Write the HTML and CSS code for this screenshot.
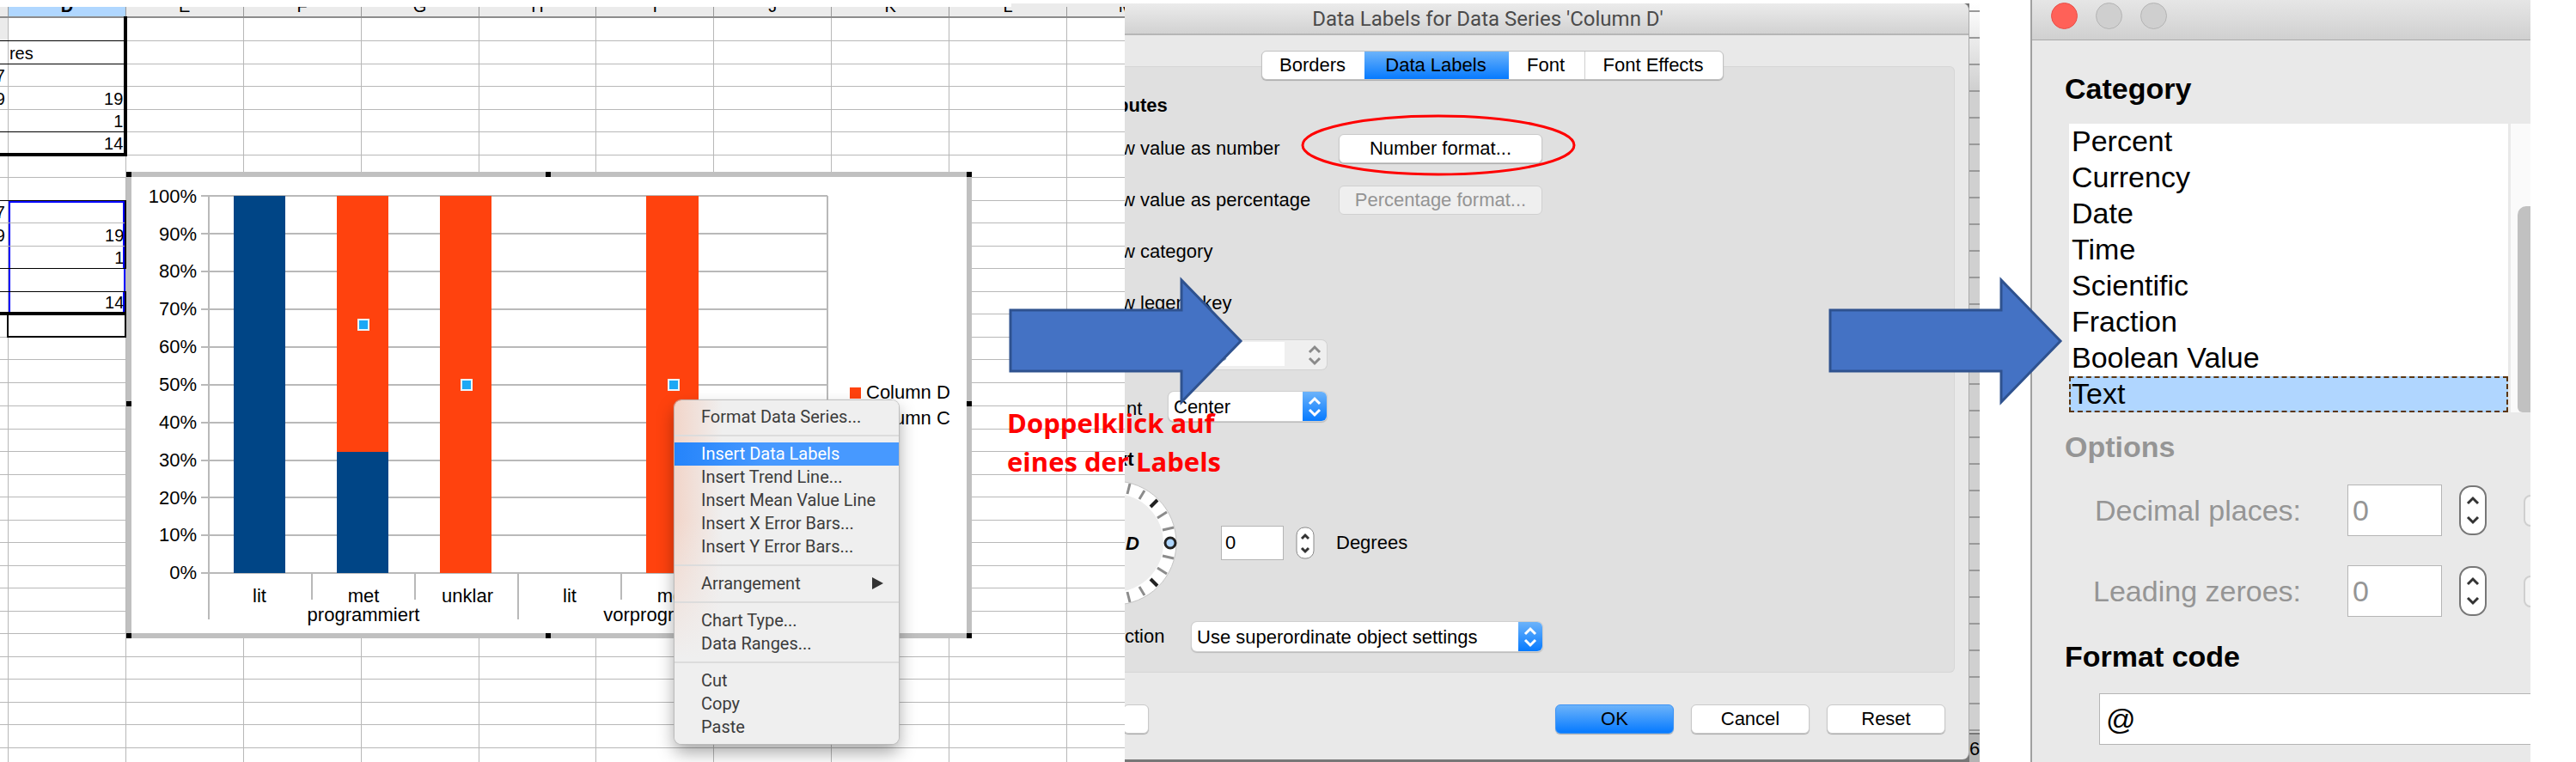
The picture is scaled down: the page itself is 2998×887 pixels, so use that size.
FILE: index.html
```html
<!DOCTYPE html>
<html lang="en">
<head>
<meta charset="utf-8">
<title>Data Labels for Data Series</title>
<link rel="stylesheet" href="styles.css">
</head>
<body>
<main class="stage">

  <section class="sheet-panel">
    <div class="backdrop-edge"></div>
    <div class="sheet">
      <table class="cells">
        <thead><tr id="head"></tr></thead>
        <tbody id="rows"></tbody>
      </table>

      <figure class="chart">
        <svg class="chart-svg" viewBox="147 200 984 543" width="984" height="543" role="img" aria-label="Stacked percent column chart">
          <rect x="150" y="203" width="978" height="537" fill="#fff" stroke="#c0c0c0" stroke-width="6"/>
          <g stroke="#b9b9b9" stroke-width="2" fill="none" shape-rendering="crispEdges">
            <path d="M234 228H963M234 272H963M234 316H963M234 360H963M234 404H963M234 448H963M234 492H963M234 536H963M234 579H963M234 623H963M234 667H963"/>
            <path d="M243 228V721M603 667V721M363 667V698M483 667V698M723 667V698M843 667V698M963 228V667"/>
          </g>
          <g fill="#004586">
            <rect x="272" y="228" width="60" height="439"/>
            <rect x="392" y="526" width="60" height="141"/>
          </g>
          <g fill="#ff420e">
            <rect x="392" y="228" width="60" height="298"/>
            <rect x="512" y="228" width="60" height="439"/>
            <rect x="752" y="228" width="61" height="439"/>
            <rect x="989" y="451" width="13" height="13"/>
          </g>
          <g fill="#1ba8f5" stroke="#e8f4fd" stroke-width="2">
            <rect x="417" y="372" width="12" height="12"/>
            <rect x="537" y="442" width="12" height="12"/>
            <rect x="778" y="442" width="12" height="12"/>
          </g>
          <g class="axis-y">
            <text x="229" y="236">100%</text><text x="229" y="280">90%</text><text x="229" y="323">80%</text>
            <text x="229" y="367">70%</text><text x="229" y="411">60%</text><text x="229" y="455">50%</text>
            <text x="229" y="499">40%</text><text x="229" y="543">30%</text><text x="229" y="587">20%</text>
            <text x="229" y="630">10%</text><text x="229" y="674">0%</text>
          </g>
          <g class="axis-x">
            <text x="302" y="701">lit</text><text x="423" y="701">met</text><text x="544" y="701">unklar</text>
            <text x="663" y="701">lit</text><text x="783" y="701">met</text>
            <text x="423" y="723">programmiert</text><text x="783" y="723">vorprogrammiert</text>
          </g>
          <g class="legend"><text x="1008" y="464">Column D</text><text x="1008" y="494">Column C</text></g>
          <g fill="#000">
            <rect x="147" y="200" width="6" height="6"/><rect x="635" y="200" width="6" height="6"/><rect x="1125" y="200" width="6" height="6"/>
            <rect x="147" y="467" width="6" height="6"/><rect x="1125" y="467" width="6" height="6"/>
            <rect x="147" y="737" width="6" height="6"/><rect x="635" y="737" width="6" height="6"/><rect x="1125" y="737" width="6" height="6"/>
          </g>
        </svg>
      </figure>

      <div class="menu" role="menu">
        <button class="menu-item" role="menuitem">Format Data Series...</button>
        <hr class="menu-line">
        <button class="menu-item is-active" role="menuitem">Insert Data Labels</button>
        <button class="menu-item" role="menuitem">Insert Trend Line...</button>
        <button class="menu-item" role="menuitem">Insert Mean Value Line</button>
        <button class="menu-item" role="menuitem">Insert X Error Bars...</button>
        <button class="menu-item" role="menuitem">Insert Y Error Bars...</button>
        <hr class="menu-line">
        <button class="menu-item" role="menuitem">Arrangement
          <svg width="13" height="14" viewBox="0 0 13 14"><path d="M0 0L13 7L0 14Z" fill="#333"/></svg>
        </button>
        <hr class="menu-line">
        <button class="menu-item" role="menuitem">Chart Type...</button>
        <button class="menu-item" role="menuitem">Data Ranges...</button>
        <hr class="menu-line">
        <button class="menu-item" role="menuitem">Cut</button>
        <button class="menu-item" role="menuitem">Copy</button>
        <button class="menu-item" role="menuitem">Paste</button>
      </div>
    </div>
  </section>

  <section class="dialog-panel">
    <div class="dialog-clip">
      <div class="dialog">
        <header class="dialog-title">Data Labels for Data Series 'Column D'</header>
        <div class="dialog-body">
          <nav class="tabs" role="tablist">
            <button class="tab tab-borders" role="tab">Borders</button>
            <button class="tab tab-labels is-active" role="tab" aria-selected="true">Data Labels</button>
            <button class="tab tab-font" role="tab">Font</button>
            <button class="tab tab-effects" role="tab">Font Effects</button>
          </nav>
          <div class="pane">
            <h2 class="pane-heading">butes</h2>
            <div class="field">
              <span class="field-label">w value as number</span>
              <span class="ringed">
                <button class="btn btn-wide">Number format...</button>
                <svg class="ring" width="320" height="72" viewBox="0 0 320 72"><ellipse cx="160" cy="36" rx="158" ry="34" fill="none" stroke="#f00" stroke-width="3"/></svg>
              </span>
            </div>
            <div class="field">
              <span class="field-label">w value as percentage</span>
              <button class="btn btn-wide" disabled>Percentage format...</button>
            </div>
            <div class="field"><span class="field-label">w category</span></div>
            <div class="field"><span class="field-label">w legend key</span></div>
            <div class="field field-combo">
              <span class="combo combo-off">
                <select aria-label="Separator" disabled><option>Space</option></select>
                <svg width="28" height="34" viewBox="0 0 28 34"><path d="M8 14L14 8L20 14M8 21L14 27L20 21" fill="none" stroke="#8a8a8a" stroke-width="3"/></svg>
              </span>
            </div>
            <div class="field field-combo">
              <label class="combo-label" for="placement">nt</label>
              <span class="combo">
                <select id="placement"><option>Center</option></select>
                <svg width="28" height="34" viewBox="0 0 28 34"><path d="M8 14L14 8L20 14M8 21L14 27L20 21" fill="none" stroke="#fff" stroke-width="3"/></svg>
              </span>
            </div>
            <h2 class="pane-heading heading-rotate">xt</h2>
            <div class="rotate">
              <svg class="dial" width="62" height="146" viewBox="0 -73 62 146">
                <circle cx="-12" cy="0" r="72" fill="#fff" stroke="#c4c4c4"/>
                <circle cx="-12" cy="0" r="57" fill="#ececec"/>
                <g stroke="#8c8c8c" stroke-width="3">
                  <path d="M3 -57L6 -69M17 -51L23 -61M38 -29L49 -36M44 -15L57 -18M44 15L57 18M38 29L49 36M17 51L23 61M3 57L6 69"/>
                  <path d="M30 -42L38 -50M30 42L38 50" stroke="#222" stroke-width="4"/>
                </g>
                <circle cx="53" cy="0" r="6" fill="#aed6ff" stroke="#222" stroke-width="3"/>
                <text class="dial-text" x="1" y="8">D</text>
              </svg>
              <input class="num" id="degrees" type="text" value="0">
              <svg class="spin" width="22" height="38" viewBox="0 0 22 38"><rect x="1" y="1" width="20" height="36" rx="9" fill="#fff" stroke="#8a8a8a"/><path d="M7 14L11 10L15 14M7 25L11 29L15 25" fill="none" stroke="#333" stroke-width="3"/></svg>
              <label for="degrees">Degrees</label>
            </div>
            <div class="field field-direction">
              <label class="direction-label" for="direction">ction</label>
              <span class="combo combo-long">
                <select id="direction"><option>Use superordinate object settings</option></select>
                <svg width="28" height="34" viewBox="0 0 28 34"><path d="M8 14L14 8L20 14M8 21L14 27L20 21" fill="none" stroke="#fff" stroke-width="3"/></svg>
              </span>
            </div>
          </div>
          <footer class="dialog-footer">
            <button class="btn btn-help" aria-label="Help"></button>
            <button class="btn btn-primary">OK</button>
            <button class="btn">Cancel</button>
            <button class="btn">Reset</button>
          </footer>
        </div>
      </div>
      <div class="shade"><div class="shade-rows"></div><div class="shade-status">6</div></div>
    </div>
    <svg class="arrow arrow-first" width="274" height="150" viewBox="0 0 274 150"><path d="M2 39H201V4L270 75L201 146V110H2Z" fill="#4472c4" stroke="#2f528f" stroke-width="3"/></svg>
    <p class="note">Doppelklick auf<br>eines der Labels</p>
  </section>

  <section class="format-panel">
    <div class="format">
      <header class="format-title"><i class="dot dot-close"></i><i class="dot"></i><i class="dot"></i></header>
      <h2 class="format-heading heading-category">Category</h2>
      <div class="list-area">
        <ul class="list" role="listbox" aria-label="Category">
          <li role="option">Percent</li>
          <li role="option">Currency</li>
          <li role="option">Date</li>
          <li role="option">Time</li>
          <li role="option">Scientific</li>
          <li role="option">Fraction</li>
          <li role="option">Boolean Value</li>
          <li role="option" class="is-selected" aria-selected="true">Text</li>
        </ul>
        <div class="track"><div class="thumb"></div></div>
      </div>
      <h2 class="format-heading heading-options">Options</h2>
      <div class="option">
        <label for="decimals">Decimal places:</label>
        <input class="num num-big" id="decimals" type="text" value="0" disabled>
        <svg class="spin-big" width="32" height="58" viewBox="0 0 32 58"><rect x="1" y="1" width="30" height="56" rx="13" fill="#fff" stroke="#777" stroke-width="2"/><path d="M10 21L16 15L22 21M10 37L16 43L22 37" fill="none" stroke="#333" stroke-width="3"/></svg>
        <span class="check-edge"></span>
      </div>
      <div class="option">
        <label for="zeroes">Leading zeroes:</label>
        <input class="num num-big" id="zeroes" type="text" value="0" disabled>
        <svg class="spin-big" width="32" height="58" viewBox="0 0 32 58"><rect x="1" y="1" width="30" height="56" rx="13" fill="#fff" stroke="#777" stroke-width="2"/><path d="M10 21L16 15L22 21M10 37L16 43L22 37" fill="none" stroke="#333" stroke-width="3"/></svg>
        <span class="check-edge"></span>
      </div>
      <h2 class="format-heading heading-code"><label for="code">Format code</label></h2>
      <input class="num code" id="code" type="text" value="@">
    </div>
    <svg class="arrow arrow-second" width="274" height="150" viewBox="0 0 274 150"><path d="M2 39H201V4L270 75L201 146V110H2Z" fill="#4472c4" stroke="#2f528f" stroke-width="3"/></svg>
  </section>

</main>
<script src="sheet.js"></script>
</body>
</html>
```

FILE: styles.css
```css
* { box-sizing: border-box; }

body {
  margin: 0;
  background: #fff;
  color: #000;
  font-family: "Liberation Sans", Arial, sans-serif;
  font-size: 22px;
}

button, input, select { font: inherit; color: inherit; }
h2, p, ul, figure { margin: 0; padding: 0; }
svg { display: block; flex: none; }

.stage {
  display: grid;
  grid-template-columns: minmax(0, 1309fr) minmax(0, 995fr) minmax(0, 641fr);
  min-height: 100vh;
  padding-right: 53px;
  overflow: hidden;
}

/* Spreadsheet */
.sheet-panel {
  display: flex;
  flex-direction: column;
  padding-top: 4px;
  contain: size;
  overflow: hidden;
}
.backdrop-edge { flex: none; width: 132px; height: 4px; margin-left: auto; background: #ebebeb; }
.sheet { position: relative; flex: 1; min-height: 0; overflow: hidden; }

.cells {
  table-layout: fixed;
  width: 1507px;
  margin: -14px 0 0 -128px;
  border-collapse: collapse;
  font-size: 20px;
  line-height: 20px;
}
.cells th {
  height: 26px;
  padding: 0;
  background: #ebebeb;
  border-right: 1px solid #999;
  border-bottom: 2px solid #8c8c8c;
  font-weight: 400;
}
.cells .head-active { background: #b0d7ff; font-weight: 700; }
.cells td {
  height: 26px;
  padding: 2px 1px 0;
  border: 1px solid #b8b8b8;
  text-align: right;
}
.cells tr:nth-child(even) td, .cells tr:nth-child(16n+1) td { height: 27px; }
.cells .c { padding-right: 3px; }
.cells .text { text-align: left; }
.cells .stub { background: #ebebeb; }
.cells .line { border-bottom: 1px solid #000; }
.cells .heavy { border-bottom: 4px solid #000; }
.cells .edge { border-right: 4px solid #000; }
.cells .side { border-right: 2px solid #000; }
.cells .first { border-left: 1px solid #000; border-top: 1px solid #000; }
.cells .cursor { border: 2px solid #000; border-top: 4px solid #000; }
.cells .range { box-shadow: inset 2px 0 #00f, inset -2px 0 #00f; }
.cells .range-top { box-shadow: inset 2px 0 #00f, inset -2px 0 #00f, inset 0 2px #00f; }

.chart { position: absolute; left: 147px; top: 192px; }
.chart text { font-size: 22px; }
.axis-y { text-anchor: end; }
.axis-x { text-anchor: middle; }

.menu {
  position: absolute;
  left: 785px;
  top: 458px;
  width: 261px;
  padding: 6px 0;
  border-radius: 8px;
  background:
    linear-gradient(rgba(239, 239, 239, 0) 35%, #efefef 75%),
    linear-gradient(90deg, #f2d5c9, #efefef 56px);
  box-shadow: 0 0 1px 1px #bbb, 0 10px 20px rgba(0, 0, 0, .35);
  font-family: Roboto, sans-serif;
  font-size: 20px;
  color: #3c3c3c;
}
.menu-item {
  display: flex;
  align-items: center;
  justify-content: space-between;
  width: 100%;
  height: 27px;
  padding: 0 18px 2px 31px;
  border: 0;
  background: none;
  text-align: left;
  line-height: 24px;
}
.menu-item.is-active { background: linear-gradient(90deg, #2584fb, #4799ff 40%); color: #fff; }
.menu-line { height: 2px; margin: 7px 0; border: 0; background: #dcdcdc; }

/* Data labels dialog */
.dialog-panel { position: relative; padding-top: 4px; }
.dialog-clip { display: flex; height: 100%; overflow: hidden; background: #777; }
.dialog {
  display: flex;
  flex-direction: column;
  flex: 1;
  min-width: 0;
  margin-bottom: 3px;
  background: #e9e9e9;
  border-right: 1px solid #aaa;
  border-radius: 0 8px 8px 0;
  overflow: hidden;
}
.dialog-title {
  height: 37px;
  padding-right: 137px;
  border-bottom: 2px solid #b6b6b6;
  background: linear-gradient(#ebebeb, #d2d2d2);
  color: #4b4b4b;
  font-family: Roboto, sans-serif;
  font-size: 24px;
  line-height: 36px;
  text-align: center;
}
.dialog-body { display: flex; flex-direction: column; flex: 1; padding: 18px 16px 0 0; }
.tabs {
  display: flex;
  align-self: flex-start;
  z-index: 1;
  height: 34px;
  margin: 0 0 -16px 159px;
  border: 1px solid #c2c2c2;
  border-radius: 6px;
  background: #fff;
  box-shadow: 0 1px 1px #aaa;
}
.tab { padding: 0 2px 0 0; border: 0; border-right: 1px solid #d0d0d0; background: none; }
.tab-borders { width: 119px; border-right: 0; }
.tab-labels { width: 168px; border-right: 0; }
.tab-font { width: 89px; }
.tab-effects { width: 160px; border-right: 0; }
.tab.is-active { background: linear-gradient(#6cb3fa, #067aff); }

.pane {
  display: flex;
  flex-direction: column;
  height: 706px;
  padding-top: 29px;
  border: 1px solid #d6d6d6;
  border-left: 0;
  border-radius: 0 6px 6px 0;
  background: #e0e0e0;
}
.pane-heading { height: 36px; margin-left: -9px; font-size: 22px; line-height: 32px; }
.heading-rotate { height: 58px; line-height: 64px; }
.field { display: flex; align-items: center; height: 60px; white-space: nowrap; }
.field-label { width: 253px; margin-left: -4px; }
.field-combo .combo { width: 184px; }
.combo-label { width: 49px; margin-left: 2px; padding-top: 6px; }
.combo-off { margin-left: 51px; }

.btn {
  width: 138px;
  height: 34px;
  padding: 0;
  border: 1px solid #cacaca;
  border-radius: 6px;
  background: #fff;
  box-shadow: 0 1px 1px #aaa;
}
.btn-wide { width: 237px; }
.btn:disabled { background: #efefef; border-color: #d0d0d0; box-shadow: none; color: #949494; }
.btn-primary { border-color: #3c93f5; background: linear-gradient(#6cb3fa, #067aff); }
.btn-help { width: 30px; margin: 0 auto 0 -2px; }

.ringed { position: relative; }
.ring { position: absolute; left: -44px; top: -23px; pointer-events: none; }

.combo {
  display: flex;
  height: 34px;
  border-radius: 6px;
  background: #fff;
  box-shadow: 0 0 0 1px #cfcfcf, 0 1px 1px 1px #bbb;
  overflow: hidden;
}
.combo select {
  flex: 1;
  min-width: 0;
  padding: 0 6px;
  border: 0;
  background: none;
  appearance: none;
}
.combo svg { background: linear-gradient(#6cb3fa, #067aff); }
.combo-off { background: #efefef; box-shadow: 0 0 0 1px #d2d2d2; }
.combo-off select { flex: none; width: 135px; height: 28px; margin: 2px auto 0 0; background: #fff; color: #949494; opacity: 1; }
.combo-off svg { background: none; }
.combo-long { width: 408px; }

.rotate { display: flex; align-items: center; height: 142px; }
.dial-text { font-size: 22px; font-weight: 700; font-style: italic; }
.num {
  width: 73px;
  height: 40px;
  padding: 0 4px;
  border: 1px solid #b5b5b5;
  border-radius: 0;
  background: #fff;
}
.rotate .num { margin-left: 50px; }
.spin { margin: 0 25px 0 14px; }
.field-direction { margin-top: 8px; }
.direction-label { width: 78px; }

.dialog-footer { display: flex; gap: 20px; align-items: center; margin-top: 37px; padding-right: 11px; height: 34px; }

.shade { display: flex; flex-direction: column; width: 12px; background: linear-gradient(#fff, #d0d0d0 100px); overflow: hidden; }
.shade-rows { flex: 1; background: repeating-linear-gradient(transparent 0 29px, #999 29px 31px); margin-top: -21px; }
.shade-status { height: 34px; background: #b4b4b4; border-top: 2px solid #777; line-height: 34px; }

/* Number format dialog */
.format-panel { position: relative; margin-left: 59px; }
.format { height: 100%; border-left: 2px solid #a0a0a0; background: #e9e9e9; overflow: hidden; font-size: 34px; }
.format-title {
  display: flex;
  gap: 21px;
  height: 47px;
  padding: 3px 0 0 22px;
  border-bottom: 1px solid #aaa;
  background: linear-gradient(#e6e6e6, #d0d0d0);
}
.dot { width: 31px; height: 31px; border: 1px solid #b4b4b4; border-radius: 50%; background: #cfcfcf; }
.dot-close { border-color: #e8504a; background: #ff6158; }
.format-heading { padding-left: 38px; font-size: 34px; line-height: 40px; }
.heading-category { margin: 36px 0 21px; }
.heading-options { margin: 20px 0 24px; color: #959595; }
.heading-code { margin: 26px 0 23px; }
.list-area { display: flex; height: 336px; padding-left: 43px; }
.list { flex: 1; list-style: none; background: #fff; }
.list li { height: 42px; padding-left: 3px; line-height: 40px; }
.list .is-selected { padding-left: 1px; border: 2px dashed #5a3510; background: #b0d6ff; line-height: 36px; }
.track { width: 23px; margin-left: 3px; padding: 96px 0 0 8px; background: #fafafa; }
.thumb { height: 100%; border-radius: 10px 0 0 6px; background: #c1c1c1; }
.option { display: flex; align-items: center; height: 60px; margin-bottom: 34px; color: #959595; }
.option + .option { margin-bottom: 0; }
.option label { width: 313px; text-align: right; }
.num-big { width: 110px; height: 60px; margin-left: 54px; padding: 0 5px; }
.num-big:disabled { color: #959595; }
.spin-big { margin: 0 43px 0 20px; }
.check-edge { flex: none; width: 16px; height: 37px; margin-right: -8px; border: 2px solid #cfcfcf; border-radius: 8px; background: #f3f3f3; }
.code { display: block; width: 100%; height: 60px; margin-left: 78px; padding: 0 7px; }

/* Annotations */
.arrow { position: absolute; top: 322px; z-index: 2; }
.arrow-first { left: -135px; }
.arrow-second { left: -235px; }
.note {
  position: absolute;
  left: -137px;
  top: 470px;
  z-index: 2;
  color: #f00;
  font-family: "Open Sans", "Noto Sans", sans-serif;
  font-size: 31px;
  font-weight: 700;
  line-height: 45px;
  white-space: nowrap;
}
```

FILE: sheet.js
```js
const columns = ["C", "D", "E", "F", "G", "H", "I", "J", "K", "L", "M"];

// Row number -> [C value, C class, D value, D class]
const filled = {
  1: ["", "stub line", "", "first edge line"],
  2: ["", "line", "res", "text edge line"],
  3: ["7", "", "", "edge"],
  4: ["9", "", "19", "edge"],
  5: ["", "line", "1", "edge line"],
  6: ["", "heavy", "14", "edge heavy"],
  8: ["", "line", "", "line"],
  9: ["7", "", "", "side range-top"],
  10: ["9", "", "19", "side range"],
  11: ["", "line", "1", "side range line"],
  12: ["", "line", "", "range line"],
  13: ["", "heavy", "14", "side range heavy"],
  14: ["", "", "", "cursor"]
};

const head = document.getElementById("head");
columns.forEach((name) => {
  const th = document.createElement("th");
  th.textContent = name === "C" ? "" : name;
  if (name === "D") th.className = "head-active";
  head.append(th);
});

const body = document.getElementById("rows");
for (let r = 1; r <= 33; r++) {
  const tr = document.createElement("tr");
  const row = filled[r] || ["", "", "", ""];
  columns.forEach((name, i) => {
    const td = document.createElement("td");
    if (i === 0) { td.textContent = row[0]; td.className = "c " + row[1]; }
    if (i === 1) { td.textContent = row[2]; td.className = row[3]; }
    tr.append(td);
  });
  body.append(tr);
}
```
